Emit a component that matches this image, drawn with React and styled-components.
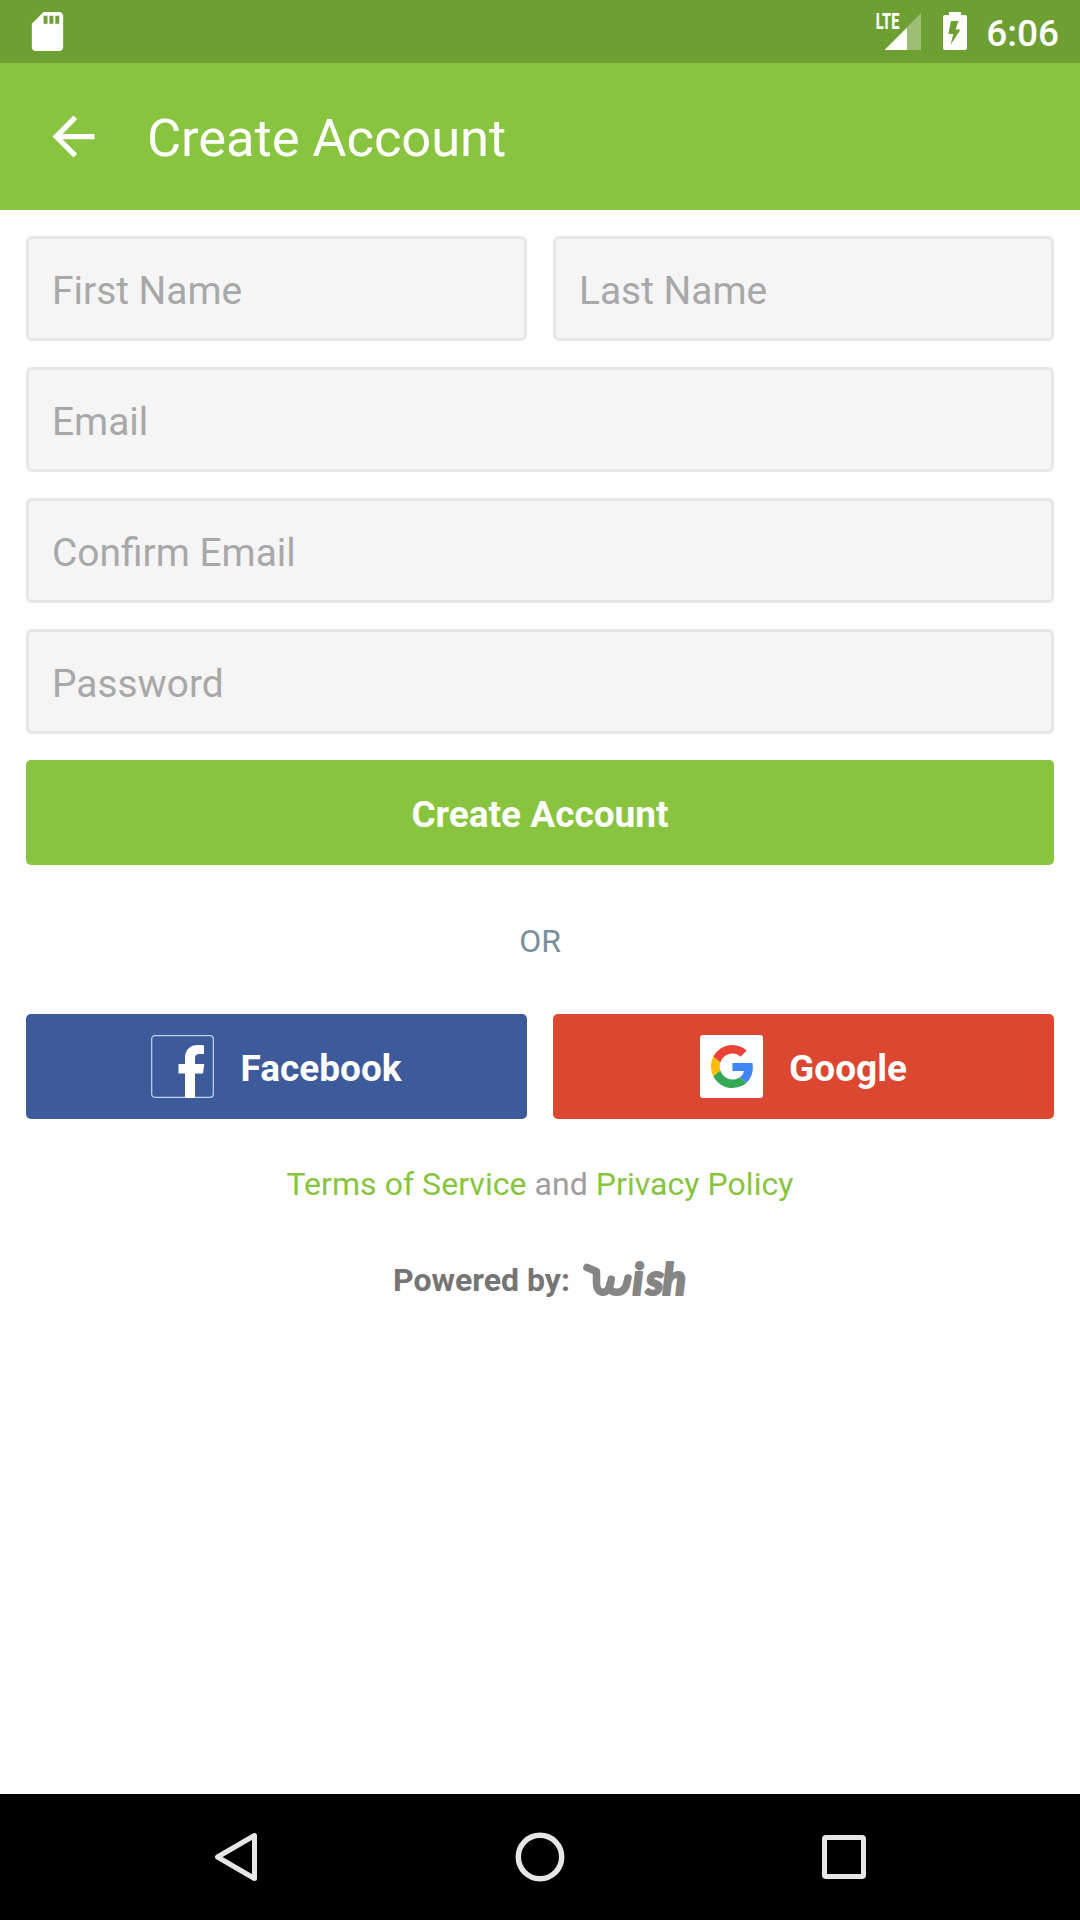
import React from "react";
import styled, { createGlobalStyle } from "styled-components";

const GlobalStyle = createGlobalStyle`
  *, *::before, *::after { box-sizing: border-box; }
  body { margin: 0; background: #fefefe; font-family: Roboto, "Noto Sans", sans-serif; }
  button, input { font-family: inherit; margin: 0; }
  svg { display: block; flex: none; }
`;

const Screen = styled.div`
  display: flex;
  flex-direction: column;
  width: 1080px;
  height: 1920px;
  background: #fefefe;
  overflow: hidden;
`;

const StatusBar = styled.header`
  display: flex;
  align-items: center;
  justify-content: space-between;
  height: 63px;
  padding: 0 21px 0 24px;
  background: #6d9f32;
  color: #fff;
`;

const StatusIcons = styled.div`
  display: flex;
  align-items: center;
`;

const Battery = styled.svg`
  margin-left: 22px;
`;

const Clock = styled.time`
  margin-left: 19px;
  padding-top: 4px;
  font-size: 37px;
  line-height: 44px;
  font-weight: 500;
`;

const AppBar = styled.div`
  display: flex;
  align-items: center;
  height: 147px;
  padding-left: 42px;
  background: #88c440;
  color: #fff;
`;

const BackButton = styled.button`
  padding: 0;
  border: 0;
  background: none;
  color: inherit;
`;

const Title = styled.h1`
  margin: 3px 0 0 42px;
  font-size: 52.5px;
  line-height: 62px;
  font-weight: 400;
  letter-spacing: -0.08px;
`;

const Content = styled.main`
  flex: 1;
  display: flex;
  flex-direction: column;
  padding: 26px;
`;

const Form = styled.form`
  display: flex;
  flex-direction: column;
  gap: 26px;
`;

const Row = styled.div`
  display: grid;
  grid-template-columns: 1fr 1fr;
  gap: 26px;
`;

const Field = styled.input`
  width: 100%;
  height: 105px;
  padding: 4px 24px 0 23px;
  border: 3px solid #e7e7e7;
  border-radius: 6px;
  background: #f5f5f5;
  color: #444;
  font-size: 38.9px;
  outline: none;
  &::placeholder { color: #a8a8a8; opacity: 1; }
`;

const Button = styled.button`
  display: flex;
  align-items: center;
  justify-content: center;
  gap: 26px;
  height: 105px;
  padding: 0;
  border: 0;
  border-radius: 5px;
  background: ${(p) => p.$color};
  color: #fff;
  font-size: 37px;
  line-height: 44px;
  font-weight: 700;
`;

const ButtonLabel = styled.span`
  padding-top: 4px;
`;

const Divider = styled.div`
  display: flex;
  align-items: center;
  justify-content: center;
  height: 149px;
  padding-top: 2px;
  color: #78909c;
  font-size: 32px;
`;

const Legal = styled.p`
  margin: 47px 0 0;
  text-align: center;
  color: #9e9e9e;
  font-size: 32px;
  line-height: 37px;
  letter-spacing: 0.05px;
`;

const Link = styled.a`
  color: #88c440;
`;

const Powered = styled.div`
  display: flex;
  align-items: center;
  justify-content: center;
  gap: 12px;
  height: 40px;
  margin-top: 57px;
  color: #757575;
  font-size: 32px;
  line-height: 37px;
  font-weight: 700;
`;

const NavBar = styled.nav`
  display: flex;
  justify-content: center;
  height: 126px;
  background: #000;
`;

const NavButton = styled.button`
  display: flex;
  align-items: center;
  justify-content: center;
  width: 304px;
  padding: 0;
  border: 0;
  background: none;
`;

const SdCardIcon = () => (
  <svg width="47" height="47" viewBox="0 0 24 24" fill="#fff">
    <path d="M18 2h-8L4 8v12c0 1.1.9 2 2 2h12c1.1 0 2-.9 2-2V4c0-1.1-.9-2-2-2zm-6 6h-2V4h2v4zm3 0h-2V4h2v4zm3 0h-2V4h2v4z" />
  </svg>
);

const SignalIcon = () => (
  <svg width="46" height="63" viewBox="0 0 46 63" fill="#fff">
    <path d="M32 27 46 13V50H32z" opacity=".33" />
    <path d="M9.500 50 32 27.500V50z" />
    <text x=".8" y="29" fontFamily="Roboto" fontWeight="800" fontSize="21.500" textLength="23.500" lengthAdjust="spacingAndGlyphs">LTE</text>
  </svg>
);

const BatteryIcon = () => (
  <Battery width="24" height="63" viewBox="0 0 24 63" fill="#fff" fillRule="evenodd">
    <path d="M6 12h12v3h4q2 0 2 2v31q0 2-2 2H2q-2 0-2-2V17q0-2 2-2h4zM8 21 5.300 34h5L7.500 45 17.500 29.500h-5L15.500 21z" />
  </Battery>
);

const ArrowIcon = () => (
  <svg width="63" height="63" viewBox="0 0 24 24" fill="currentColor">
    <path d="M20 11H7.830l5.590-5.590L12 4l-8 8 8 8 1.410-1.410L7.830 13H20v-2z" />
  </svg>
);

const FacebookIcon = () => (
  <svg width="63" height="63" viewBox="0 0 63 63">
    <rect x=".7" y=".7" width="61.600" height="61.600" rx="3" fill="none" stroke="#c3d2f2" strokeWidth="1.200" />
    <path fill="#fff" d="M34 63V38.500h-6.500v-9.500H34v-5.500C34 14.500 39 10 47 10c2.500 0 4.500.1 6 .4v8.600h-4c-4.200 0-5 2-5 4.700V29h9.300l-1.300 9.500h-8V63z" />
  </svg>
);

const GoogleIcon = () => (
  <svg width="63" height="63" viewBox="0 0 63 63">
    <rect width="63" height="63" rx="3" fill="#fff" />
    <svg x="11" y="10" width="42.300" height="43" viewBox="0 0 47.500 48" preserveAspectRatio="none">
      <path fill="#EA4335" d="M24 9.500c3.540 0 6.710 1.220 9.210 3.600l6.850-6.850C35.900 2.380 30.470 0 24 0 14.620 0 6.510 5.380 2.560 13.220l7.980 6.190C12.430 13.720 17.740 9.500 24 9.500z" />
      <path fill="#4285F4" d="M46.980 24.550c0-1.570-.15-3.090-.38-4.550H24v9.020h12.940c-.58 2.960-2.260 5.480-4.780 7.180l7.730 6c4.510-4.180 7.090-10.360 7.090-17.650z" />
      <path fill="#FBBC05" d="M10.530 28.590c-.48-1.450-.76-2.990-.76-4.590s.27-3.140.76-4.590l-7.980-6.190C.92 16.460 0 20.120 0 24c0 3.880.92 7.540 2.560 10.780l7.970-6.190z" />
      <path fill="#34A853" d="M24 48c6.480 0 11.930-2.130 15.890-5.810l-7.730-6c-2.150 1.450-4.920 2.300-8.160 2.300-6.260 0-11.570-4.220-13.470-9.910l-7.980 6.190C6.510 42.620 14.620 48 24 48z" />
    </svg>
  </svg>
);

const WishLogo = () => (
  <svg width="105" height="60" viewBox="0 -11 105 60" fill="#858585" stroke="#858585" strokeLinecap="round" strokeLinejoin="round" role="img" aria-label="wish">
    <path d="M5 6.500 14.500 10.500V22c0 6 2.500 9.300 6.500 9.300 4.500 0 7-4 8.300-13M46 17l-1.500 6.500C43 29 39 31.300 34.500 31.300c-5 0-7.200-3-6.700-8.300" fill="none" strokeWidth="7.500" />
    <text y="34" x="50.500 64 80.500" fontFamily="Lato" fontStyle="italic" fontWeight="900" fontSize="43" strokeWidth="2.200">ish</text>
  </svg>
);

export default function App() {
  return (
    <>
      <GlobalStyle />
      <Screen>
        <StatusBar>
          <SdCardIcon />
          <StatusIcons>
            <SignalIcon />
            <BatteryIcon />
            <Clock>6:06</Clock>
          </StatusIcons>
        </StatusBar>
        <AppBar>
          <BackButton type="button"><ArrowIcon /></BackButton>
          <Title>Create Account</Title>
        </AppBar>
        <Content>
          <Form>
            <Row>
              <Field placeholder="First Name" />
              <Field placeholder="Last Name" />
            </Row>
            <Field placeholder="Email" />
            <Field placeholder="Confirm Email" />
            <Field type="password" placeholder="Password" />
            <Button type="button" $color="#88c440"><ButtonLabel>Create Account</ButtonLabel></Button>
          </Form>
          <Divider>OR</Divider>
          <Row>
            <Button type="button" $color="#3d5a9a"><FacebookIcon /><ButtonLabel>Facebook</ButtonLabel></Button>
            <Button type="button" $color="#db4730"><GoogleIcon /><ButtonLabel>Google</ButtonLabel></Button>
          </Row>
          <Legal><Link>Terms of Service</Link> and <Link>Privacy Policy</Link></Legal>
          <Powered><span>Powered by:</span><WishLogo /></Powered>
        </Content>
        <NavBar>
          <NavButton type="button">
            <svg width="50" height="54" viewBox="0 0 50 54" fill="none" stroke="#e6e6e6" strokeWidth="5" strokeLinejoin="round">
              <path d="M43.500 5.500v43L6.500 27z" />
            </svg>
          </NavButton>
          <NavButton type="button">
            <svg width="50" height="50" viewBox="0 0 50 50" fill="none" stroke="#e6e6e6" strokeWidth="5.500">
              <circle cx="25" cy="25" r="21.700" />
            </svg>
          </NavButton>
          <NavButton type="button">
            <svg width="44" height="44" viewBox="0 0 44 44" fill="none" stroke="#e6e6e6" strokeWidth="5">
              <rect x="2.500" y="2.500" width="39" height="39" rx="1.500" />
            </svg>
          </NavButton>
        </NavBar>
      </Screen>
    </>
  );
}
